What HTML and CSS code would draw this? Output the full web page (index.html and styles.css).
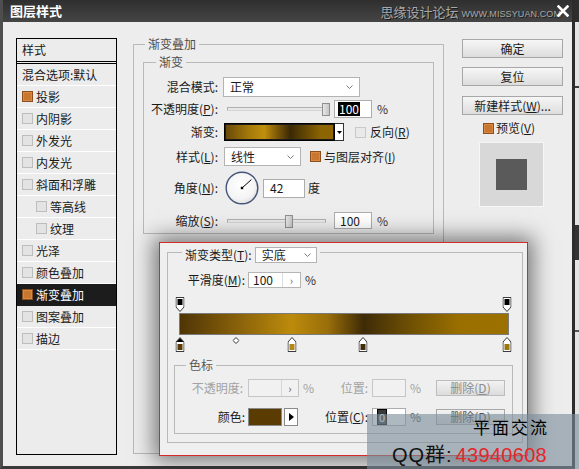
FILE: index.html
```html
<!DOCTYPE html>
<html lang="zh-CN">
<head>
<meta charset="utf-8">
<title>图层样式</title>
<link rel="stylesheet" href="styles.css">
</head>
<body>
<div class="screen">
  <div class="dialog">
    <div class="titlebar">
      <span class="title">图层样式</span>
      <span class="site"><span class="site-cn">思缘设计论坛</span><span class="site-en">WWW.MISSYUAN.COM</span></span>
      <svg class="close" width="12" height="12" viewBox="0 0 12 12"><path d="M1.5 1.5L10.5 10.5M10.5 1.5L1.5 10.5" stroke="#fff" stroke-width="2.6" stroke-linecap="square"/></svg>
    </div>
    <div class="content">
      <div class="stylelist">
        <div class="list-head">样式</div>
        <div class="list-row">混合选项:默认</div>
        <div class="list-row"><span class="cb on"></span>投影</div>
        <div class="list-row"><span class="cb"></span>内阴影</div>
        <div class="list-row"><span class="cb"></span>外发光</div>
        <div class="list-row"><span class="cb"></span>内发光</div>
        <div class="list-row"><span class="cb"></span>斜面和浮雕</div>
        <div class="list-row sub"><span class="cb"></span>等高线</div>
        <div class="list-row sub"><span class="cb"></span>纹理</div>
        <div class="list-row"><span class="cb"></span>光泽</div>
        <div class="list-row"><span class="cb"></span>颜色叠加</div>
        <div class="list-row selected"><span class="cb on"></span>渐变叠加</div>
        <div class="list-row"><span class="cb"></span>图案叠加</div>
        <div class="list-row"><span class="cb"></span>描边</div>
      </div>

      <fieldset class="group overlay-group">
        <legend class="legend-main">渐变叠加</legend>
        <fieldset class="group gradient-group">
          <legend class="legend-sub">渐变</legend>
          <div class="form">
            <div class="row r-blend">
              <span class="lbl">混合模式:</span>
              <div class="select sel-blend"><span>正常</span><svg class="chev" width="7" height="4" viewBox="0 0 7 4"><path d="M0.5 0.5L3.5 3.5L6.5 0.5" fill="none" stroke="#7a7a7a"/></svg></div>
            </div>
            <div class="row r-opacity">
              <span class="lbl">不透明度(<u>P</u>):</span>
              <div class="slider"><div class="track"></div><div class="thumb" style="left:99px"></div></div>
              <div class="field f-pct"><span class="hl">100</span></div>
              <span class="unit">%</span>
            </div>
            <div class="row r-grad">
              <span class="lbl">渐变:</span>
              <div class="grad-preview"></div>
              <div class="grad-drop"><svg width="5" height="3" viewBox="0 0 5 3"><path d="M0 0H5L2.5 3Z" fill="#000"/></svg></div>
              <span class="cb light cb-reverse"></span><span class="cb-label">反向(<u>R</u>)</span>
            </div>
            <div class="row r-style">
              <span class="lbl">样式(<u>L</u>):</span>
              <div class="select sel-style"><span>线性</span><svg class="chev" width="7" height="4" viewBox="0 0 7 4"><path d="M0.5 0.5L3.5 3.5L6.5 0.5" fill="none" stroke="#7a7a7a"/></svg></div>
              <span class="cb on cb-align"></span><span class="cb-label">与图层对齐(<u>I</u>)</span>
            </div>
            <div class="row r-angle">
              <span class="lbl">角度(<u>N</u>):</span>
              <svg class="dial" width="34" height="34" viewBox="0 0 34 34">
                <defs><radialGradient id="dialfill" cx="45%" cy="40%" r="65%"><stop offset="0" stop-color="#ffffff"/><stop offset="0.7" stop-color="#f4f4f4"/><stop offset="1" stop-color="#d8d8d8"/></radialGradient></defs>
                <circle cx="17" cy="17" r="15.8" fill="url(#dialfill)" stroke="#43557a" stroke-width="1.4"/>
                <path d="M17 17L26.4 8.6" stroke="#000" stroke-width="1"/>
                <rect x="15.8" y="15.8" width="2.4" height="2.4" fill="#000"/>
              </svg>
              <div class="field f-angle">42</div>
              <span class="unit u-deg">度</span>
            </div>
            <div class="row r-scale">
              <span class="lbl">缩放(<u>S</u>):</span>
              <div class="slider"><div class="track"></div><div class="thumb" style="left:62px"></div></div>
              <div class="field f-pct f-scale">100</div>
              <span class="unit">%</span>
            </div>
          </div>
        </fieldset>
      </fieldset>

      <div class="side">
        <div class="btn">确定</div>
        <div class="btn">复位</div>
        <div class="btn btn-new">新建样式(<u>W</u>)...</div>
        <div class="preview-toggle"><span class="cb on"></span>预览(<u>V</u>)</div>
        <div class="preview-box"><div class="preview-square"></div></div>
      </div>
    </div>
  </div>
  <div class="backdrop"></div>

  <div class="editor">
    <fieldset class="group type-group">
      <legend class="legend-type"><span class="type-label">渐变类型(<u>T</u>):</span><div class="select sel-type"><span>实底</span><svg class="chev" width="7" height="4" viewBox="0 0 7 4"><path d="M0.5 0.5L3.5 3.5L6.5 0.5" fill="none" stroke="#7a7a7a"/></svg></div></legend>
      <div class="smooth-row">
        <span class="lbl-smooth">平滑度(<u>M</u>):</span>
        <div class="spin s-smooth"><span class="spin-val">100</span><span class="spin-arrow">›</span></div>
        <span class="unit">%</span>
      </div>
      <div class="stops top-stops">
        <svg class="stop" style="left:0.3%" width="9" height="15" viewBox="0 0 9 15"><path d="M0.5 0.5H8.5V10L4.5 14.5L0.5 10Z" fill="#fff" stroke="#3a3a3a"/><rect x="2" y="2" width="5" height="6" fill="#000"/></svg>
        <svg class="stop" style="left:99.5%" width="9" height="15" viewBox="0 0 9 15"><path d="M0.5 0.5H8.5V10L4.5 14.5L0.5 10Z" fill="#fff" stroke="#3a3a3a"/><rect x="2" y="2" width="5" height="6" fill="#000"/></svg>
      </div>
      <div class="gbar"></div>
      <div class="stops bottom-stops">
        <svg class="stop" style="left:0.3%" width="9" height="15" viewBox="0 0 9 15"><path d="M4.5 0.5L8.5 5V14.5H0.5V5Z" fill="#fff" stroke="#3a3a3a"/><path d="M4.5 1L8 5H1Z" fill="#000"/><rect x="2" y="7" width="5" height="6" fill="#5a3c06"/></svg>
        <svg class="stop diamond" style="left:17.3%" width="7" height="7" viewBox="0 0 7 7"><path d="M3.5 0.5L6.5 3.5L3.5 6.5L0.5 3.5Z" fill="#fff" stroke="#333"/></svg>
        <svg class="stop" style="left:34.2%" width="9" height="15" viewBox="0 0 9 15"><path d="M4.5 0.5L8.5 5V14.5H0.5V5Z" fill="#fff" stroke="#3a3a3a"/><rect x="2" y="7" width="5" height="6" fill="#b0891a"/></svg>
        <svg class="stop" style="left:55.8%" width="9" height="15" viewBox="0 0 9 15"><path d="M4.5 0.5L8.5 5V14.5H0.5V5Z" fill="#fff" stroke="#3a3a3a"/><rect x="2" y="7" width="5" height="6" fill="#3e2d0d"/></svg>
        <svg class="stop" style="left:99.4%" width="9" height="15" viewBox="0 0 9 15"><path d="M4.5 0.5L8.5 5V14.5H0.5V5Z" fill="#fff" stroke="#3a3a3a"/><rect x="2" y="7" width="5" height="6" fill="#9a7810"/></svg>
      </div>
      <fieldset class="group stop-group">
        <legend class="legend-stop">色标</legend>
        <div class="stop-grid">
          <span class="g-lbl dis">不透明度:</span>
          <div class="spin dis s-op"><span class="spin-val"></span><span class="spin-arrow">›</span></div>
          <span class="g-unit dis">%</span>
          <span class="g-lbl2 dis">位置:</span>
          <div class="field dis f-pos"></div>
          <span class="g-unit2 dis">%</span>
          <div class="btn-del dis">删除(<u>D</u>)</div>

          <span class="g-lbl">颜色:</span>
          <div class="color-pick"><div class="swatch"></div><div class="pick-arrow"><svg width="5" height="8" viewBox="0 0 5 8"><path d="M0 0L5 4L0 8Z" fill="#000"/></svg></div></div>
          <span></span>
          <span class="g-lbl2">位置(<u>C</u>):</span>
          <div class="field f-pos"><span class="hl hl-zero">0</span></div>
          <span class="g-unit2">%</span>
          <div class="btn-del">删除(<u>D</u>)</div>
        </div>
      </fieldset>
    </fieldset>
  </div>

  <div class="watermark">
    <div class="wm-title">平面交流</div>
    <div class="wm-qq"><span class="wm-label">QQ群:</span><span class="wm-num">43940608</span></div>
  </div>
</div>
</body>
</html>
```

FILE: styles.css
```css
* { box-sizing: border-box; }
html, body { margin: 0; padding: 0; }
body {
  width: 579px; height: 469px; overflow: hidden;
  background: #e4e4e4;
  font-family: "Noto Sans CJK SC", "Noto Sans", sans-serif;
  font-size: 12px; color: #1a1a1a;
}
u { text-decoration: underline; text-underline-offset: 1px; }

.screen { position: relative; width: 579px; height: 469px; display: flex; }

.dialog {
  width: 575px; height: 469px;
  display: flex; flex-direction: column;
  background: #ededed;
  border-left: 3px solid #4e4e4e;
  border-right: 3px solid #2c2c2c;
  border-bottom: 3px solid #3a3a3a;
}

.titlebar {
  height: 22px; flex: none;
  display: flex; align-items: center;
  padding: 0 3px 0 7px;
  background: linear-gradient(#2f2f2f, #454545);
}
.title { color: #fff; font-weight: bold; font-size: 13px; line-height: 16px; }
.site {
  margin-left: auto; display: flex; align-items: baseline;
  color: #a8a8a8; text-shadow: 1px 1px 0 #1c1c1c;
}
.site-cn { font-size: 13px; line-height: 15px; }
.site-en { font-family: "Liberation Sans", sans-serif; font-size: 9px; margin-left: 3px; letter-spacing: 0.1px; }
.close { margin-left: -4px; flex: none; }

.content { flex: 1; display: flex; align-items: flex-start; padding: 15px 0 0 13px; }

/* style list */
.stylelist {
  margin-top: 1px; width: 101px; height: 417px;
  border: 1px solid #000; background: #ececec;
}
.list-head {
  height: 25px; padding-left: 5px; line-height: 21px;
  border-bottom: 3px double #000;
}
.list-row {
  height: 22px; display: flex; align-items: center;
  padding-left: 5px; border-bottom: 1px solid #fff;
  white-space: nowrap; line-height: 14px;
}
.list-row.sub { padding-left: 19px; }
.list-row.selected { background: #1c1c1c; color: #fff; border-bottom-color: #1c1c1c; }
.list-row .cb { margin-right: 3px; }

.cb {
  display: inline-block; flex: none;
  width: 11px; height: 11px;
  border: 1px solid #bdbdbd; background: #e3e3e3;
}
.cb.light { background: #e9e9e9; border-color: #c9c9c9; }
.cb.on { background: #c9772f; border-color: #8e4f1f; box-shadow: inset 0 0 0 1px #d88a45; }

/* group boxes */
fieldset.group { margin: 0; padding: 0; border: 1px solid #b9b9b9; min-width: 0; }
legend { padding: 0 3px; height: 14px; line-height: 14px; font-size: 12px; }

fieldset.overlay-group { width: 311px; height: 417px; margin-left: 16px; padding: 0 9px; }
.legend-main { margin-left: 2px; color: #4f4f4f; }
fieldset.gradient-group { margin-top: 4px; width: 100%; height: 179px; }
.legend-sub { margin-left: 12px; color: #4f4f4f; }

.form { padding-top: 8px; }
.row { display: flex; align-items: center; }
.r-blend { height: 20px; }
.r-opacity { height: 18px; margin-top: 3px; }
.r-grad { height: 18px; margin-top: 5px; }
.r-style { height: 19px; margin-top: 6px; }
.r-angle { height: 34px; margin-top: 5px; }
.r-scale { height: 17px; margin-top: 7px; }
.lbl { width: 74px; margin-right: 5px; text-align: right; white-space: nowrap; line-height: 14px; }

.select {
  display: flex; align-items: center; justify-content: space-between;
  background: #fff; border: 1px solid #b3b3b3;
  padding: 0 6px 0 6px; line-height: 14px;
}
.sel-blend { width: 137px; height: 20px; }
.sel-style { width: 77px; height: 19px; margin-left: 1px; }
.chev { flex: none; }

.slider { position: relative; width: 107px; height: 100%; display: flex; align-items: center; }
.track {
  width: 99px; height: 4px; margin-left: 4px;
  background: #e8e8e8; border: 1px solid #b0b0b0; border-bottom-color: #d4d4d4;
}
.thumb {
  position: absolute; top: 50%; width: 8px; height: 13px; margin-top: -6px;
  background: linear-gradient(90deg, #e6e6e6, #c6c6c6);
  border: 1px solid #8f8f8f;
}

.field {
  background: #fff; border: 1px solid #adadad;
  line-height: 14px; display: flex; align-items: center;
}
.f-pct { width: 38px; height: 18px; margin-left: 4px; padding-left: 3px; }
.f-scale { height: 17px; padding-left: 5px; }
.hl { background: #000; color: #fff; padding: 0 1px; line-height: 14px; }
.unit { margin-left: 5px; line-height: 14px; color: #333; }

.grad-preview {
  width: 111px; height: 18px; margin-left: 1px;
  border: 1px solid #000; box-shadow: inset 0 0 0 1px #1a1a1a;
  background: linear-gradient(90deg, #664707 0%, #a57a0a 22%, #c08f0e 36%, #7c5808 48%, #3b2905 60%, #5e4304 72%, #8c6400 88%, #8e6500 100%);
}
.grad-drop {
  width: 9px; height: 18px; background: #fff;
  border: 1px solid #333; border-left: 0;
  display: flex; align-items: center; justify-content: center;
}
.cb-reverse { margin-left: 11px; }
.cb-label { margin-left: 4px; line-height: 14px; white-space: nowrap; }
.cb-align { margin-left: 9px; }
.r-style .cb-label { margin-left: 3px; }

.dial { margin-left: 2px; flex: none; }
.f-angle { width: 42px; height: 19px; margin-left: 4px; padding-left: 6px; }
.u-deg { margin-left: 3px; color: #1a1a1a; }

/* right column */
.side { width: 101px; margin-left: 18px; margin-top: 2px; display: flex; flex-direction: column; }
.btn {
  height: 19px; line-height: 17px; text-align: center;
  border: 1px solid #a7a7a7;
  background: linear-gradient(#f6f6f6, #dddddd);
  white-space: nowrap;
}
.btn + .btn { margin-top: 9px; }
.side .btn-new { margin-top: 10px; }
.preview-toggle { margin-top: 6px; margin-left: 21px; height: 14px; display: flex; align-items: center; line-height: 14px; }
.preview-toggle .cb { margin-right: 2px; }
.preview-box {
  margin-top: 7px; margin-left: 17px; width: 65px; height: 65px;
  background: #d8d8d8; border: 1px solid #f6f6f6;
  display: flex; align-items: center; justify-content: center;
}
.preview-square { width: 31px; height: 31px; background: #5a5a5a; }

.backdrop {
  width: 4px; height: 469px;
  background: linear-gradient(to bottom, #2e2e2e 0, #2e2e2e 22px, #e4e4e4 22px, #e4e4e4 86px, #3a3a3a 86px, #3a3a3a 88px, #e4e4e4 88px, #e4e4e4 225px, #333 225px, #333 260px, #e4e4e4 260px, #e4e4e4 330px, #555 330px, #555 332px, #e4e4e4 332px);
}

/* gradient editor popup */
.editor {
  position: absolute; left: 159px; top: 242px;
  width: 369px; height: 214px;
  border: 1px solid #d42a2a; background: #efefef;
  box-shadow: 0 0 20px 5px rgba(0, 0, 0, 0.5);
  padding: 2px 0 0 7px;
}
fieldset.type-group { width: 356px; height: 198px; }
.legend-type { display: flex; align-items: flex-start; margin-left: 14px; padding: 0 3px; overflow: visible; }
.type-label { margin-top: 2px; line-height: 16px; white-space: nowrap; }
.sel-type { width: 62px; height: 16px; margin-top: 2px; margin-left: 3px; padding: 0 5px 0 6px; }

.smooth-row { margin-top: 13px; height: 16px; display: flex; align-items: center; }
.lbl-smooth { width: 80px; padding-right: 3px; text-align: right; white-space: nowrap; line-height: 14px; }
.spin { display: flex; background: #fff; border: 1px solid #b5b5b5; line-height: 14px; }
.s-smooth { width: 53px; height: 16px; }
.spin-val { flex: 1; padding-left: 4px; }
.spin-arrow {
  width: 18px; border-left: 1px solid #dedede; text-align: center;
  color: #666; font-size: 11px; line-height: 14px;
}
.smooth-row .unit { margin-left: 4px; }

.stops { position: relative; width: 330px; height: 15px; margin-left: 11px; }
.top-stops { margin-top: 9px; }
.bottom-stops { margin-top: 2px; }
.stop { position: absolute; top: 0; transform: translateX(-50%); }
.gbar {
  width: 330px; height: 22px; margin: 1px 0 0 11px;
  border: 1px solid #7a7a7a;
  background: linear-gradient(90deg, #4f3506 0%, #8a620a 18%, #bc8b0c 34%, #9a6e0a 45%, #3e2b06 56%, #6e5004 70%, #9a6f00 85%, #9c7100 100%);
}

fieldset.stop-group { width: 339px; height: 76px; margin: 6px 0 0 6px; padding-top: 7px; }
.legend-stop { margin-left: 11px; color: #5a5a5a; }
.stop-grid {
  display: grid;
  grid-template-columns: 73px 51px 18px 55px 34px 30px 69px;
  grid-template-rows: 18px 18px;
  row-gap: 11px; align-items: center;
  line-height: 14px;
}
.g-lbl { text-align: right; padding-right: 3px; white-space: nowrap; }
.g-lbl.dis { padding-right: 5px; }
.g-lbl2 { text-align: right; padding-right: 4px; white-space: nowrap; }
.g-unit { padding-left: 4px; }
.g-unit2 { padding-left: 4px; color: #555; }
.dis { color: #a2a2a2; }
.g-unit2.dis { color: #a2a2a2; }
.spin.dis { height: 18px; background: #f1f1f1; border-color: #c6c6c6; }
.s-op .spin-arrow { width: 17px; border-left-color: #d6d6d6; color: #555; line-height: 16px; }
.f-pos { width: 34px; height: 18px; padding-left: 5px; }
.field.dis { background: #f1f1f1; border-color: #c6c6c6; }
.hl-zero { background: #3a3a3a; outline: 1px solid #000; padding: 0 1px; font-size: 11px; }
.btn-del {
  width: 69px; height: 16px; line-height: 14px; text-align: center;
  border: 1px solid #a8a8a8; background: linear-gradient(#f2f2f2, #dcdcdc);
  color: #555; white-space: nowrap;
}
.btn-del.dis { color: #8c8c8c; border-color: #bdbdbd; }
.color-pick { display: flex; height: 18px; }
.swatch { width: 34px; height: 18px; background: #5a3c02; border: 1px solid #8a8a8a; }
.pick-arrow {
  width: 14px; height: 18px; margin-left: 2px;
  background: #fff; border: 1px solid #8a8a8a;
  display: flex; align-items: center; justify-content: center;
}

/* watermark */
.watermark {
  position: absolute; left: 367px; top: 414px;
  width: 212px; height: 55px;
  background: rgba(122, 140, 154, 0.62);
  padding: 3px 32px 0 25px;
  display: flex; flex-direction: column;
}
.wm-title { align-self: flex-end; margin-right: -2px; font-size: 17px; line-height: 20px; letter-spacing: 2px; color: #000; }
.wm-qq {
  margin-top: 7px; display: flex; justify-content: space-between; align-items: baseline;
  font-family: "Liberation Sans", "Noto Sans CJK SC", sans-serif;
  font-size: 20px; line-height: 22px; color: #111; white-space: nowrap;
}
.wm-label { letter-spacing: 1px; }
.wm-num { color: #e5262a; letter-spacing: 0.3px; }
```
